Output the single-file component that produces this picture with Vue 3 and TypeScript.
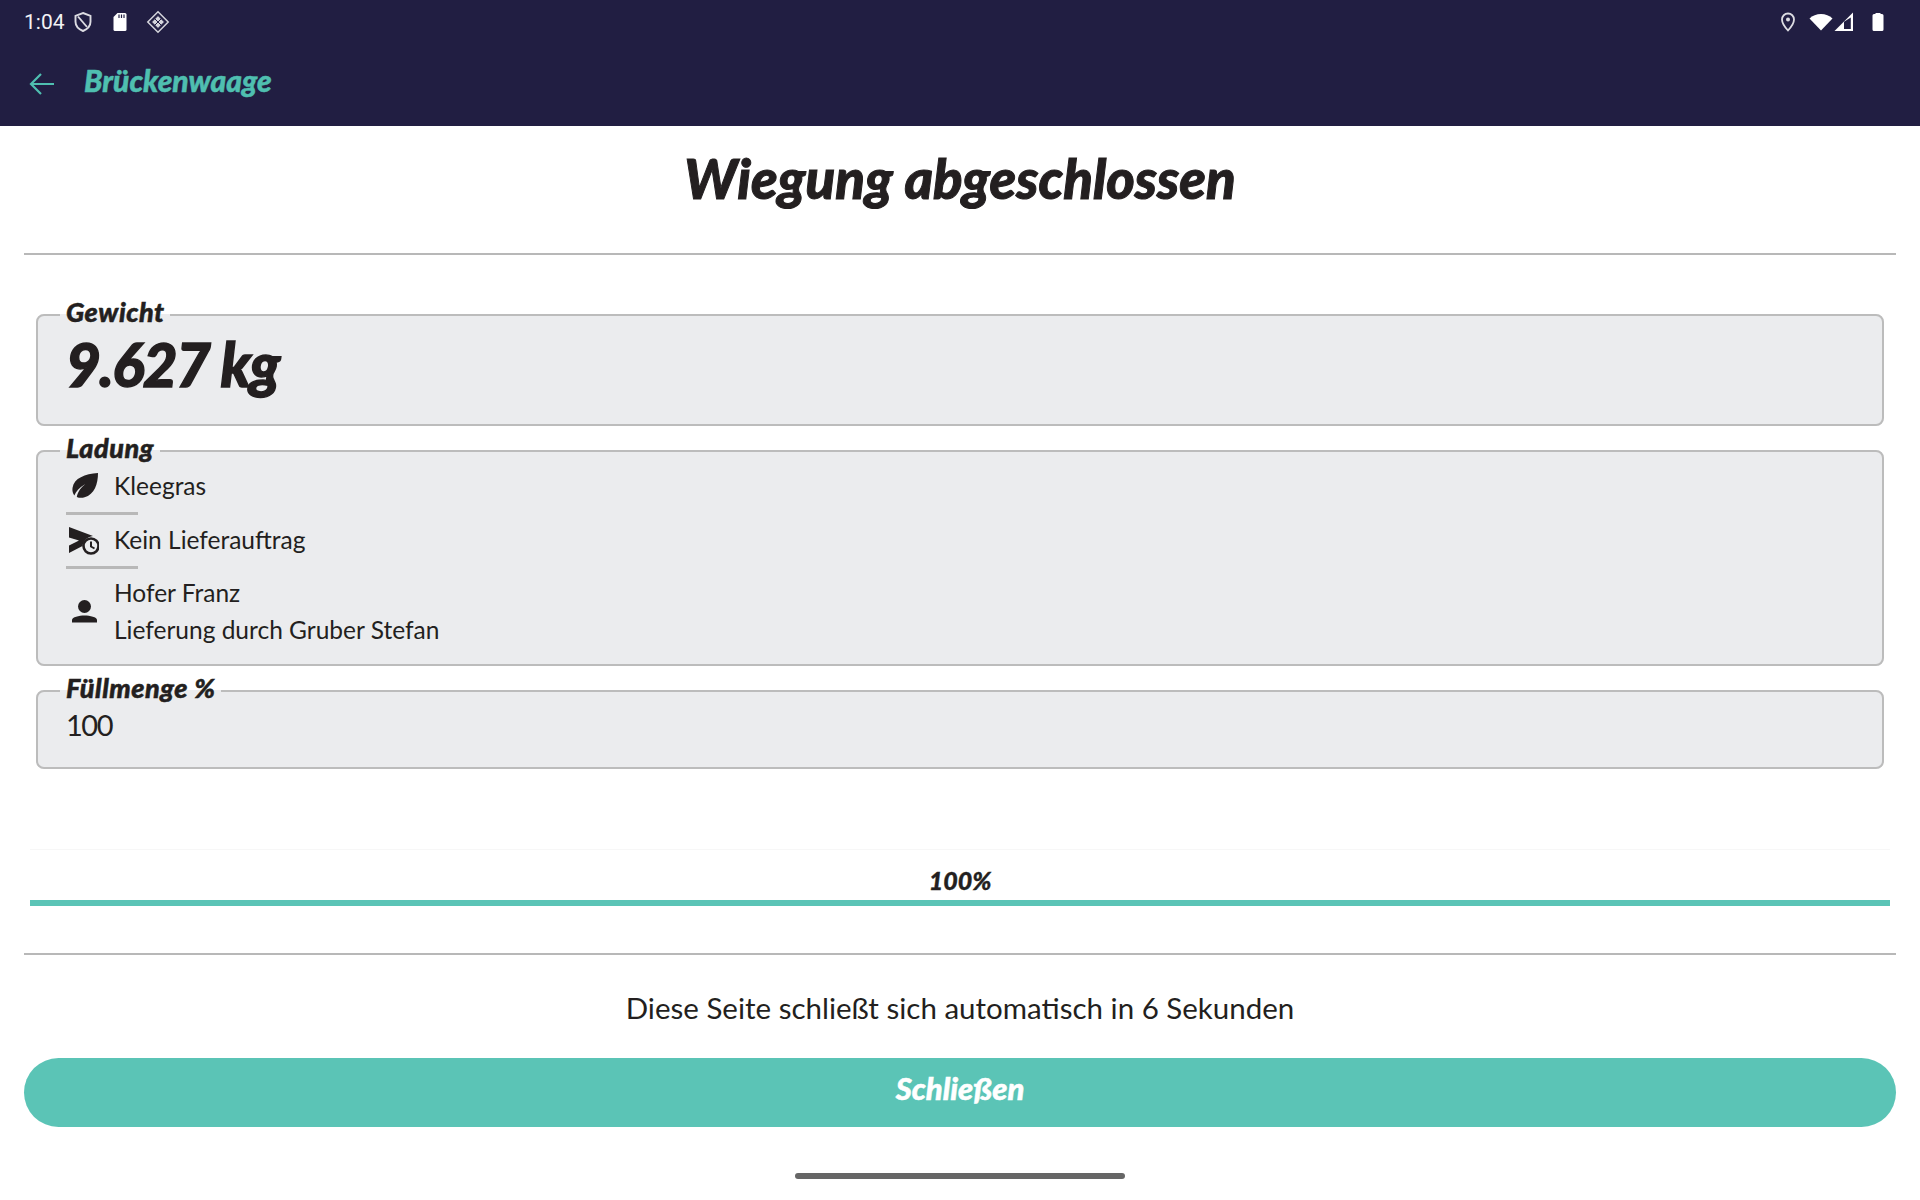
<script setup lang="ts">
const seconds = 6
const progress = 100
</script>

<template>
  <div class="page">
    <div class="status-bar">
      <div class="status-left">
        <span class="time">1:04</span>
        <svg class="st-shield" viewBox="0 0 20 22" width="20" height="22">
          <path d="M10 2 17.500 4.800v6c0 4.200-3.200 7.400-7.500 9.200-4.300-1.800-7.500-5-7.500-9.200v-6Z" fill="none" stroke="#dcdce2" stroke-width="1.900" />
          <path d="M5 5.500 14 16" stroke="#dcdce2" stroke-width="1.900" />
        </svg>
        <svg class="st-sd" viewBox="0 0 16 20" width="16" height="20">
          <path d="M5.500 1H13a1.500 1.500 0 0 1 1.500 1.500v15A1.500 1.500 0 0 1 13 19H3a1.500 1.500 0 0 1-1.500-1.500V5Z" fill="#fff" />
          <path d="M7 2.500v3.500M9.500 2.500v3.500M12 2.500v3.500" stroke="#211e42" stroke-width="1.200" />
        </svg>
        <svg class="st-nfc" viewBox="0 0 24 24" width="24" height="24">
          <path d="M12 1.800 22.200 12 12 22.200 1.800 12Z" fill="none" stroke="#d5d5dc" stroke-width="1.500" />
          <path d="M12 5.500 18.500 12 12 18.500 5.500 12Z" fill="#d5d5dc" />
          <path d="M8.800 8.800 15.200 15.200M12 5.500 18.500 12M8.800 15.200 15.200 8.800M5.500 12 12 5.500M12 18.500 5.500 12M12 18.500 18.500 12" stroke="#211e42" stroke-width="1" />
        </svg>
      </div>
      <div class="status-right">
        <svg class="st-pin" viewBox="0 0 16 20" width="16" height="20">
          <path d="M8 1.500a6 6 0 0 0-6 6C2 12 8 18.500 8 18.500S14 12 14 7.500a6 6 0 0 0-6-6Z" fill="none" stroke="#dcdce2" stroke-width="1.800" />
          <circle cx="8" cy="7.500" r="2" fill="#dcdce2" />
        </svg>
        <svg class="st-wifi" viewBox="0 0 24 18" width="24" height="18">
          <path d="M0.500 5.500C3.500 2.500 7.500 1 12 1s8.500 1.500 11.500 4.500L12 17.500Z" fill="#fff" />
        </svg>
        <svg class="st-signal" viewBox="0 0 20 20" width="20" height="20">
          <path d="M0.500 19 19 0.500V19Z" fill="#fff" />
          <path d="M10 17V9.800L16.800 5.500V17Z" fill="#211e42" />
        </svg>
        <svg class="st-batt" viewBox="0 0 12 20" width="12" height="20">
          <path d="M3.500 2V1h5v1H10a1.500 1.500 0 0 1 1.500 1.500v14A1.500 1.500 0 0 1 10 19H2A1.500 1.500 0 0 1 .5 17.500v-14A1.500 1.500 0 0 1 2 2Z" fill="#fff" />
        </svg>
      </div>
    </div>

    <header class="app-bar">
      <svg class="back" viewBox="0 0 26 24" width="26" height="24">
        <path d="M25 12H2.500M12 2 2 12l10 10" fill="none" stroke="#4fbfb0" stroke-width="2.200" />
      </svg>
      <span class="app-title">Brückenwaage</span>
    </header>

    <main class="content">
      <h1 class="heading">Wiegung abgeschlossen</h1>
      <hr class="rule" />

      <div class="fields">
        <fieldset class="box box-weight">
          <legend>Gewicht</legend>
          <div class="weight">9.627 kg</div>
        </fieldset>

        <fieldset class="box box-load">
          <legend>Ladung</legend>
          <div class="row">
            <svg class="row-icon" viewBox="0 0 33 30" width="33" height="30">
              <path d="M32 2C19 3 8 7 6.500 17c-.4 2.800.3 5.300 1.800 7.500 1.700-4 5-8 11-11.500-4.300 3.800-7.500 7.500-8.500 13 2.300 1 5 1.200 7.800.3C28.500 23.500 32 13 32 2Z" fill="#231f20" />
            </svg>
            <span>Kleegras</span>
          </div>
          <div class="row-line"></div>
          <div class="row">
            <svg class="row-icon" viewBox="0 0 33 30" width="33" height="30">
              <path d="M3 2 27 11C21 12 17 16 16.500 21L3 28V20.500L13 15.500 3 12.500Z" fill="#231f20" />
              <circle cx="25" cy="21" r="7.500" fill="none" stroke="#231f20" stroke-width="2.600" />
              <path d="M25 16.500V21.500L28.500 23.500" fill="none" stroke="#231f20" stroke-width="2" />
            </svg>
            <span>Kein Lieferauftrag</span>
          </div>
          <div class="row-line"></div>
          <div class="row row-person">
            <svg class="row-icon" viewBox="0 0 33 30" width="33" height="30">
              <circle cx="18.500" cy="10.500" r="6.500" fill="#231f20" />
              <path d="M6 26.500V24C6 21 13 19.500 18.500 19.500S31 21 31 24v2.500Z" fill="#231f20" />
            </svg>
            <div class="stack">
              <span>Hofer Franz</span>
              <span>Lieferung durch Gruber Stefan</span>
            </div>
          </div>
        </fieldset>

        <fieldset class="box box-fill">
          <legend>Füllmenge %</legend>
          <div class="fill-value">100</div>
        </fieldset>
      </div>

      <div class="progress-wrap">
        <div class="progress-label">{{ progress }}%</div>
        <div class="progress-track">
          <div class="progress-bar" :style="{ width: progress + '%' }"></div>
        </div>
      </div>

      <hr class="rule rule-low" />

      <p class="notice">Diese Seite schließt sich automatisch in {{ seconds }} Sekunden</p>
      <button class="close-btn" type="button">Schließen</button>
    </main>

    <div class="home-bar-wrap"><div class="home-bar"></div></div>
  </div>
</template>

<style scoped>
.page {
  width: 1920px;
  height: 1200px;
  display: flex;
  flex-direction: column;
  background: #fff;
  color: #231f20;
  font-family: Lato, sans-serif;
  overflow: hidden;
}
.status-bar {
  flex: none;
  height: 44px;
  background: #211e42;
  display: flex;
  justify-content: space-between;
  align-items: center;
  padding: 0 36px 0 24px;
  box-sizing: border-box;
}
.status-left,
.status-right {
  display: flex;
  align-items: center;
}
.time {
  font-family: Roboto, sans-serif;
  font-size: 21px;
  color: #f2f2f5;
  margin-right: 8px;
}
.st-sd {
  margin-left: 19px;
}
.st-nfc {
  margin-left: 18px;
}
.st-wifi {
  margin-left: 13px;
}
.st-signal {
  margin-left: 1px;
}
.st-batt {
  margin-left: 18px;
}
.app-bar {
  flex: none;
  height: 82px;
  background: #211e42;
  display: flex;
  align-items: center;
  padding: 0 0 0 29px;
  box-sizing: border-box;
}
.back {
  margin-right: 29px;
  margin-top: -3px;
}
.app-title {
  font-size: 30px;
  font-weight: 900;
  font-style: italic;
  color: #4fbfb0;
  -webkit-text-stroke: 0.5px #4fbfb0;
  margin-top: -11px;
}
.content {
  flex: 1;
  padding: 0 24px;
  display: flex;
  flex-direction: column;
}
.heading {
  margin: 0;
  height: 127px;
  line-height: 104px;
  text-align: center;
  font-size: 54.5px;
  font-weight: 900;
  font-style: italic;
  -webkit-text-stroke: 1px #231f20;
}
.rule {
  flex: none;
  margin: 0;
  border: 0;
  height: 2px;
  background: #b8b8b8;
}
.fields {
  margin-top: 40px;
  padding: 0 12px;
  display: flex;
  flex-direction: column;
  gap: 5px;
}
.box {
  margin: 0;
  min-width: 0;
  padding: 0 28px;
  background: #ebecee;
  border: 2px solid #bcbcbc;
  border-radius: 8px;
  box-sizing: border-box;
}
/* text sits above the border line, so the legend is taller at the bottom */
legend {
  padding: 0 6px 6px;
  margin: 0 0 -3px -6px;
  font-size: 27px;
  font-weight: 900;
  font-style: italic;
  line-height: 34px;
  letter-spacing: 0.5px;
  -webkit-text-stroke: 0.5px #231f20;
}
.box-weight {
  height: 131px;
}
.weight {
  margin-top: -3px;
  font-size: 60px;
  font-weight: 900;
  font-style: italic;
  letter-spacing: -1.5px;
  line-height: 70px;
  -webkit-text-stroke: 1.4px #231f20;
}
.box-load {
  height: 235px;
  font-size: 24.5px;
}
.row {
  display: flex;
  align-items: center;
  gap: 15px;
  min-height: 36px;
  line-height: 36px;
}
.row-person {
  margin-top: -2px;
}
.row-icon {
  flex: none;
}
.stack {
  display: flex;
  flex-direction: column;
  line-height: 37px;
}
.row-line {
  width: 72px;
  height: 3px;
  margin: 8px 0 7px;
  background: #b8b8b8;
}
.box-fill {
  height: 98px;
}
.fill-value {
  margin-top: -3px;
  font-size: 29px;
  letter-spacing: -1.5px;
  line-height: 40px;
}
.progress-wrap {
  margin: 80px 6px 0;
  border-top: 1px solid #f7f7f7;
  padding-top: 14px;
}
.progress-label {
  text-align: center;
  font-size: 25px;
  font-weight: 900;
  font-style: italic;
  line-height: 32px;
  margin-bottom: 4px;
  -webkit-text-stroke: 0.4px #231f20;
}
.progress-track {
  height: 6px;
  background: #e6e6e6;
}
.progress-bar {
  height: 100%;
  background: #5bc4b6;
}
.rule-low {
  margin-top: 47px;
}
.notice {
  margin: 32px 0 0;
  text-align: center;
  font-size: 29.5px;
  line-height: 42px;
}
.close-btn {
  flex: none;
  margin-top: 29px;
  height: 69px;
  width: 100%;
  padding: 0 0 10px;
  border: 0;
  border-radius: 35px;
  background: #5bc4b6;
  color: #fff;
  font-family: Lato, sans-serif;
  font-size: 31px;
  font-weight: 900;
  font-style: italic;
  -webkit-text-stroke: 0.5px #fff;
}
.home-bar-wrap {
  flex: none;
  height: 27px;
  display: flex;
  justify-content: center;
}
.home-bar {
  width: 330px;
  height: 6px;
  border-radius: 3px;
  background: #666;
}
</style>

<style>
html, body {
  margin: 0;
  background: #fff;
}
</style>
